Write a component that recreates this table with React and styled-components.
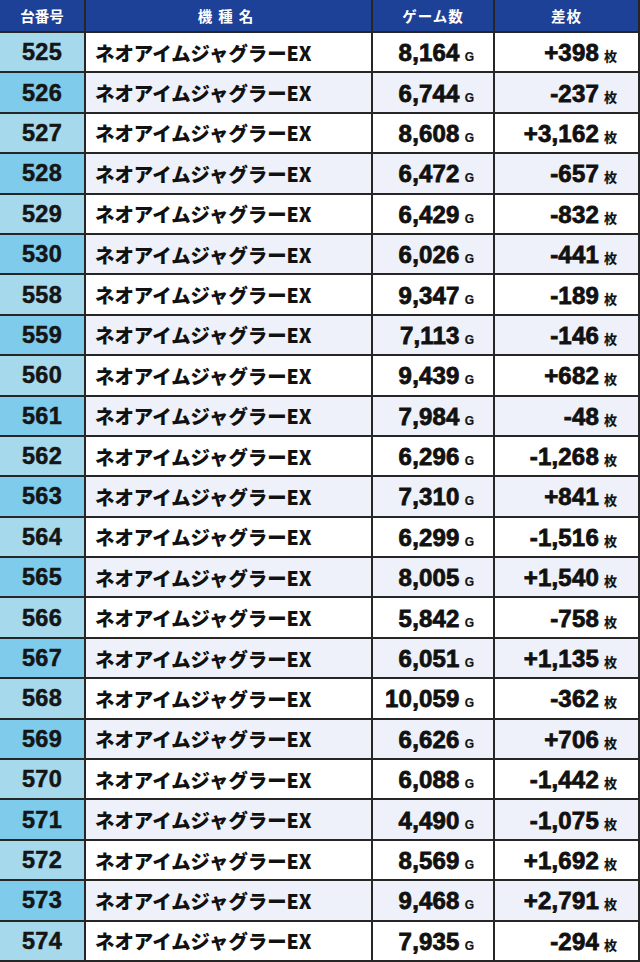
import React from 'react'
import styled, { createGlobalStyle } from 'styled-components'

const GlobalStyle = createGlobalStyle`
  html, body {
    margin: 0;
    padding: 0;
    background: #ffffff;
  }
`

const ROWS = [
  ['525', '8,164', '+398'],
  ['526', '6,744', '-237'],
  ['527', '8,608', '+3,162'],
  ['528', '6,472', '-657'],
  ['529', '6,429', '-832'],
  ['530', '6,026', '-441'],
  ['558', '9,347', '-189'],
  ['559', '7,113', '-146'],
  ['560', '9,439', '+682'],
  ['561', '7,984', '-48'],
  ['562', '6,296', '-1,268'],
  ['563', '7,310', '+841'],
  ['564', '6,299', '-1,516'],
  ['565', '8,005', '+1,540'],
  ['566', '5,842', '-758'],
  ['567', '6,051', '+1,135'],
  ['568', '10,059', '-362'],
  ['569', '6,626', '+706'],
  ['570', '6,088', '-1,442'],
  ['571', '4,490', '-1,075'],
  ['572', '8,569', '+1,692'],
  ['573', '9,468', '+2,791'],
  ['574', '7,935', '-294'],
]

const Sheet = styled.div`
  display: grid;
  grid-template-columns: 84px 285px 120px 143px;
  grid-template-rows: 31px repeat(23, 1fr);
  gap: 2px;
  height: 962px;
  width: 640px;
  box-sizing: border-box;
  padding: 0 2px 2px 0;
  background: #262626;
  font-family: "Liberation Sans", Arial, "Noto Sans CJK JP", sans-serif;
`

const HeadCell = styled.div`
  display: flex;
  align-items: center;
  justify-content: center;
  background: #1d4196;
  color: #ffffff;
  font-family: "Noto Sans CJK JP", sans-serif;
  font-size: 14.5px;
  font-weight: 700;
  letter-spacing: ${({ $spacing }) => $spacing || '0px'};
`

const NoCell = styled.div`
  display: flex;
  align-items: center;
  justify-content: center;
  padding-top: 1px;
  background: ${({ $alt }) => ($alt ? '#7ecbec' : '#a7d9ed')};
  color: #151515;
  font-size: 23.5px;
  font-weight: 700;
  letter-spacing: 0.3px;
  -webkit-text-stroke: 0.5px #151515;
`

const NameCell = styled.div`
  display: flex;
  align-items: center;
  padding-left: 9px;
  background: ${({ $alt }) => ($alt ? '#eef1f9' : '#ffffff')};
  color: #111111;
  font-family: "Noto Sans CJK JP", sans-serif;
  font-size: 19.4px;
  font-weight: 900;
  white-space: nowrap;
  overflow: hidden;
`

const NumCell = styled.div`
  display: flex;
  align-items: center;
  justify-content: flex-end;
  padding-top: 2px;
  padding-right: ${({ $pad }) => $pad};
  background: ${({ $alt }) => ($alt ? '#eef1f9' : '#ffffff')};
  color: #111111;
`

const Value = styled.span`
  font-size: 24px;
  font-weight: 700;
  letter-spacing: 0.2px;
  -webkit-text-stroke: 0.8px #111111;
  white-space: nowrap;
`

const Unit = styled.span`
  margin-left: 5px;
  font-family: ${({ $jp }) => ($jp ? '"Noto Sans CJK JP", sans-serif' : '"Liberation Sans", Arial, sans-serif')};
  font-size: ${({ $size }) => $size};
  font-weight: 700;
  letter-spacing: 0;
  -webkit-text-stroke: 0.2px #111111;
`

const App = () => {
  return (
    <>
      <GlobalStyle />
      <Sheet>
        <HeadCell>台番号</HeadCell>
        <HeadCell $spacing="6px">機種名</HeadCell>
        <HeadCell $spacing="1px">ゲーム数</HeadCell>
        <HeadCell $spacing="1px">差枚</HeadCell>
        {ROWS.map(([no, games, diff], i) => {
          const alt = i % 2 === 1
          return (
            <React.Fragment key={no}>
              <NoCell $alt={alt}>{no}</NoCell>
              <NameCell $alt={alt}>ネオアイムジャグラーEX</NameCell>
              <NumCell $alt={alt} $pad="19px">
                <Value>
                  {games}
                  <Unit $size="12px">G</Unit>
                </Value>
              </NumCell>
              <NumCell $alt={alt} $pad="21px">
                <Value>
                  {diff}
                  <Unit $jp $size="13px">枚</Unit>
                </Value>
              </NumCell>
            </React.Fragment>
          )
        })}
      </Sheet>
    </>
  )
}

export default App
